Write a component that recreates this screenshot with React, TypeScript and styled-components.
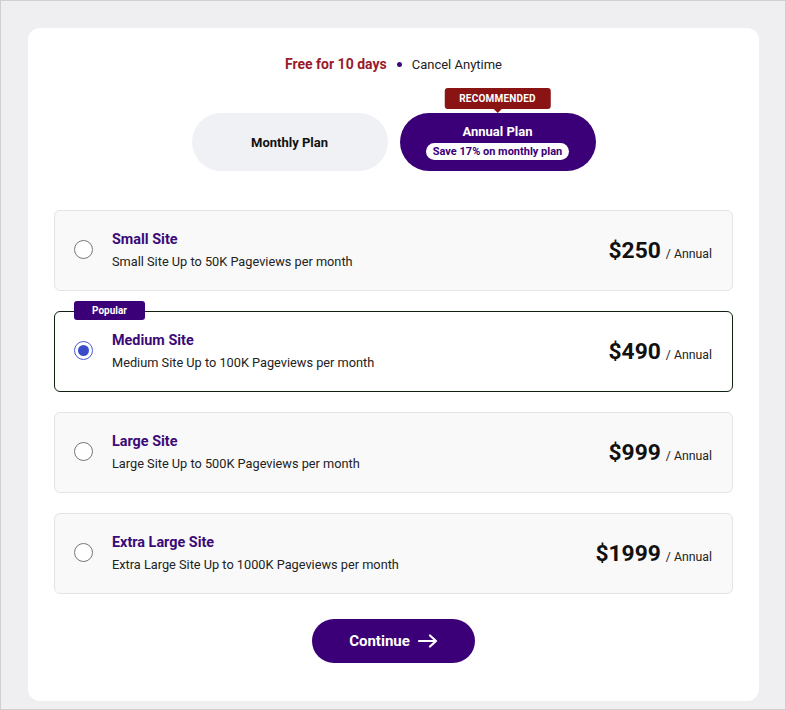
import { useState } from 'react'
import styled, { createGlobalStyle } from 'styled-components'

const GlobalStyle = createGlobalStyle`
  * { box-sizing: border-box; }
  body {
    margin: 0;
    font-family: Roboto, 'Liberation Sans', Arial, sans-serif;
  }
`

const Page = styled.div`
  width: 786px;
  height: 710px;
  background: #efeff1;
  border: 1px solid #cfcfd2;
  padding: 27px 26px 8px 27px;
`

const Card = styled.div`
  background: #fff;
  border-radius: 12px;
  height: 673px;
  padding: 26px 26px 0;
  display: flex;
  flex-direction: column;
  align-items: center;
`

const Header = styled.div`
  display: flex;
  align-items: center;
  gap: 10px;
  height: 20px;
`

const Free = styled.span`
  color: #9a1a2b;
  font-weight: 700;
  font-size: 14px;
`

const Dot = styled.span`
  width: 5px;
  height: 5px;
  border-radius: 50%;
  background: #3b0a78;
`

const Cancel = styled.span`
  color: #222;
  font-size: 13px;
`

const Toggle = styled.div`
  display: flex;
  gap: 12px;
  margin-top: 39px;
`

const PlanButton = styled.button<{ $active?: boolean }>`
  position: relative;
  width: 196px;
  height: 58px;
  border: none;
  border-radius: 29px;
  background: ${(p) => (p.$active ? '#3b0078' : '#f0f1f5')};
  color: ${(p) => (p.$active ? '#fff' : '#111')};
  font-family: inherit;
  font-weight: 700;
  font-size: 13px;
  display: flex;
  flex-direction: column;
  align-items: center;
  justify-content: center;
  gap: 4px;
  cursor: pointer;
  padding: 0;
`

const Save = styled.span`
  background: #fff;
  color: #3b0078;
  font-size: 11px;
  font-weight: 700;
  border-radius: 9px;
  padding: 2px 7px;
`

const Recommended = styled.span`
  position: absolute;
  top: -25px;
  left: 50%;
  transform: translateX(-50%);
  background: #8a1313;
  color: #fff;
  font-size: 10px;
  font-weight: 700;
  letter-spacing: 0.2px;
  border-radius: 3px;
  padding: 5px 15px;
  white-space: nowrap;

  &:after {
    content: '';
    position: absolute;
    left: 50%;
    bottom: -4px;
    transform: translateX(-50%);
    border-left: 4px solid transparent;
    border-right: 4px solid transparent;
    border-top: 4px solid #8a1313;
  }
`

const Options = styled.div`
  align-self: stretch;
  display: flex;
  flex-direction: column;
  gap: 20px;
  margin-top: 39px;
`

const Option = styled.div<{ $selected?: boolean }>`
  position: relative;
  height: 81px;
  border-radius: 6px;
  border: ${(p) => (p.$selected ? '1.5px solid #102010' : '1px solid #e4e4e6')};
  background: ${(p) => (p.$selected ? '#fff' : '#f9f9f9')};
  display: flex;
  align-items: center;
  padding: 0 20px 2px 19px;
  cursor: pointer;
`

const Radio = styled.span<{ $checked?: boolean }>`
  width: 19px;
  height: 19px;
  border-radius: 50%;
  border: 1.5px solid ${(p) => (p.$checked ? '#4a5bd0' : '#767676')};
  background: #fff;
  display: flex;
  align-items: center;
  justify-content: center;
  flex-shrink: 0;

  &:after {
    content: '';
    width: 11px;
    height: 11px;
    border-radius: 50%;
    background: ${(p) => (p.$checked ? '#3a4cc8' : 'transparent')};
  }
`

const Info = styled.div`
  margin-left: 19px;
  display: flex;
  flex-direction: column;
  gap: 6px;
  flex: 1;
`

const Name = styled.span`
  color: #3b0a78;
  font-weight: 700;
  font-size: 14.4px;
`

const Desc = styled.span`
  color: #222;
  font-size: 12.75px;
`

const Price = styled.div`
  display: flex;
  align-items: baseline;
  gap: 5px;
  margin-top: 2px;
`

const Amount = styled.span`
  font-size: 22.8px;
  font-weight: 700;
  color: #111;
`

const Period = styled.span`
  font-size: 12.3px;
  color: #222;
`

const Popular = styled.span`
  position: absolute;
  top: -11px;
  left: 19px;
  background: #3b0078;
  color: #fff;
  font-size: 10px;
  font-weight: 700;
  border-radius: 3px;
  padding: 4px 0;
  width: 71px;
  text-align: center;
`

const Continue = styled.button`
  margin-top: 25px;
  width: 163px;
  height: 44px;
  border: none;
  border-radius: 22px;
  background: #3b0078;
  color: #fff;
  font-family: inherit;
  font-size: 15px;
  font-weight: 700;
  display: flex;
  align-items: center;
  justify-content: center;
  gap: 8px;
  cursor: pointer;
`

const plans = [
  { name: 'Small Site', desc: 'Small Site Up to 50K Pageviews per month', price: '$250' },
  { name: 'Medium Site', desc: 'Medium Site Up to 100K Pageviews per month', price: '$490', popular: true },
  { name: 'Large Site', desc: 'Large Site Up to 500K Pageviews per month', price: '$999' },
  { name: 'Extra Large Site', desc: 'Extra Large Site Up to 1000K Pageviews per month', price: '$1999' },
]

const App = () => {
  const [annual, setAnnual] = useState(true)
  const [selected, setSelected] = useState(1)

  return (
    <Page>
      <GlobalStyle />
      <Card>
        <Header>
          <Free>Free for 10 days</Free>
          <Dot />
          <Cancel>Cancel Anytime</Cancel>
        </Header>
        <Toggle>
          <PlanButton $active={!annual} onClick={() => setAnnual(false)} type='button'>
            Monthly Plan
          </PlanButton>
          <PlanButton $active={annual} onClick={() => setAnnual(true)} type='button'>
            <Recommended>RECOMMENDED</Recommended>
            Annual Plan
            <Save>Save 17% on monthly plan</Save>
          </PlanButton>
        </Toggle>
        <Options>
          {plans.map((plan, i) => (
            <Option key={plan.name} $selected={selected === i} onClick={() => setSelected(i)}>
              {plan.popular && <Popular>Popular</Popular>}
              <Radio $checked={selected === i} />
              <Info>
                <Name>{plan.name}</Name>
                <Desc>{plan.desc}</Desc>
              </Info>
              <Price>
                <Amount>{plan.price}</Amount>
                <Period>/ Annual</Period>
              </Price>
            </Option>
          ))}
        </Options>
        <Continue type='button'>
          Continue
          <svg width='20' height='14' viewBox='0 0 20 14' fill='none' stroke='#fff' strokeWidth='2.2' strokeLinecap='round' strokeLinejoin='round'>
            <path d='M1 7h17M12 1.5L18 7l-6 5.5' />
          </svg>
        </Continue>
      </Card>
    </Page>
  )
}

export default App
